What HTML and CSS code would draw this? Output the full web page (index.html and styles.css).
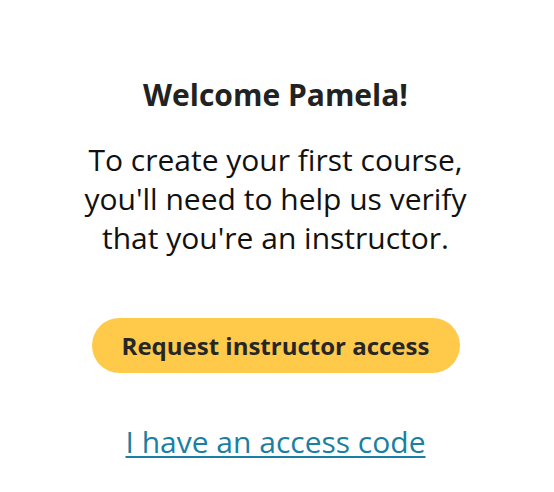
FILE: index.html
```html
<!DOCTYPE html>
<html lang="en">
<head>
<meta charset="utf-8">
<title>Welcome</title>
<link rel="stylesheet" href="styles.css">
</head>
<body>
<main class="panel">
  <h1 class="title">Welcome Pamela!</h1>
  <p class="intro">To create your first course,<br>you'll need to help us verify<br>that you're an instructor.</p>
  <button class="request" type="button">Request instructor access</button>
  <a class="code-link" href="#">I have an access code</a>
</main>
</body>
</html>
```
FILE: styles.css
```css
html, body {
  margin: 0;
  padding: 0;
  background: #ffffff;
}
body {
  font-family: "Open Sans", "Liberation Sans", sans-serif;
  color: #222222;
}
.panel {
  display: flex;
  flex-direction: column;
  align-items: center;
  padding: 75px 3px 0 0;
  text-align: center;
}
.title {
  margin: 0;
  font-size: 30px;
  font-weight: 700;
  line-height: 40px;
  color: #222222;
}
.intro {
  margin: 25px 0 0;
  font-size: 30px;
  line-height: 39px;
  color: #111111;
}
.request {
  margin-top: 61px;
  width: 368px;
  height: 55px;
  padding: 0;
  border: none;
  border-radius: 28px;
  background: #ffc94a;
  font-family: "Open Sans", "Liberation Sans", sans-serif;
  font-size: 24px;
  font-weight: 700;
  color: #262626;
  cursor: pointer;
}
.code-link {
  margin-top: 49px;
  font-size: 30px;
  line-height: 40px;
  color: #1a7fa2;
  text-decoration: underline;
  text-decoration-thickness: 2px;
  text-underline-offset: 3px;
}
```
